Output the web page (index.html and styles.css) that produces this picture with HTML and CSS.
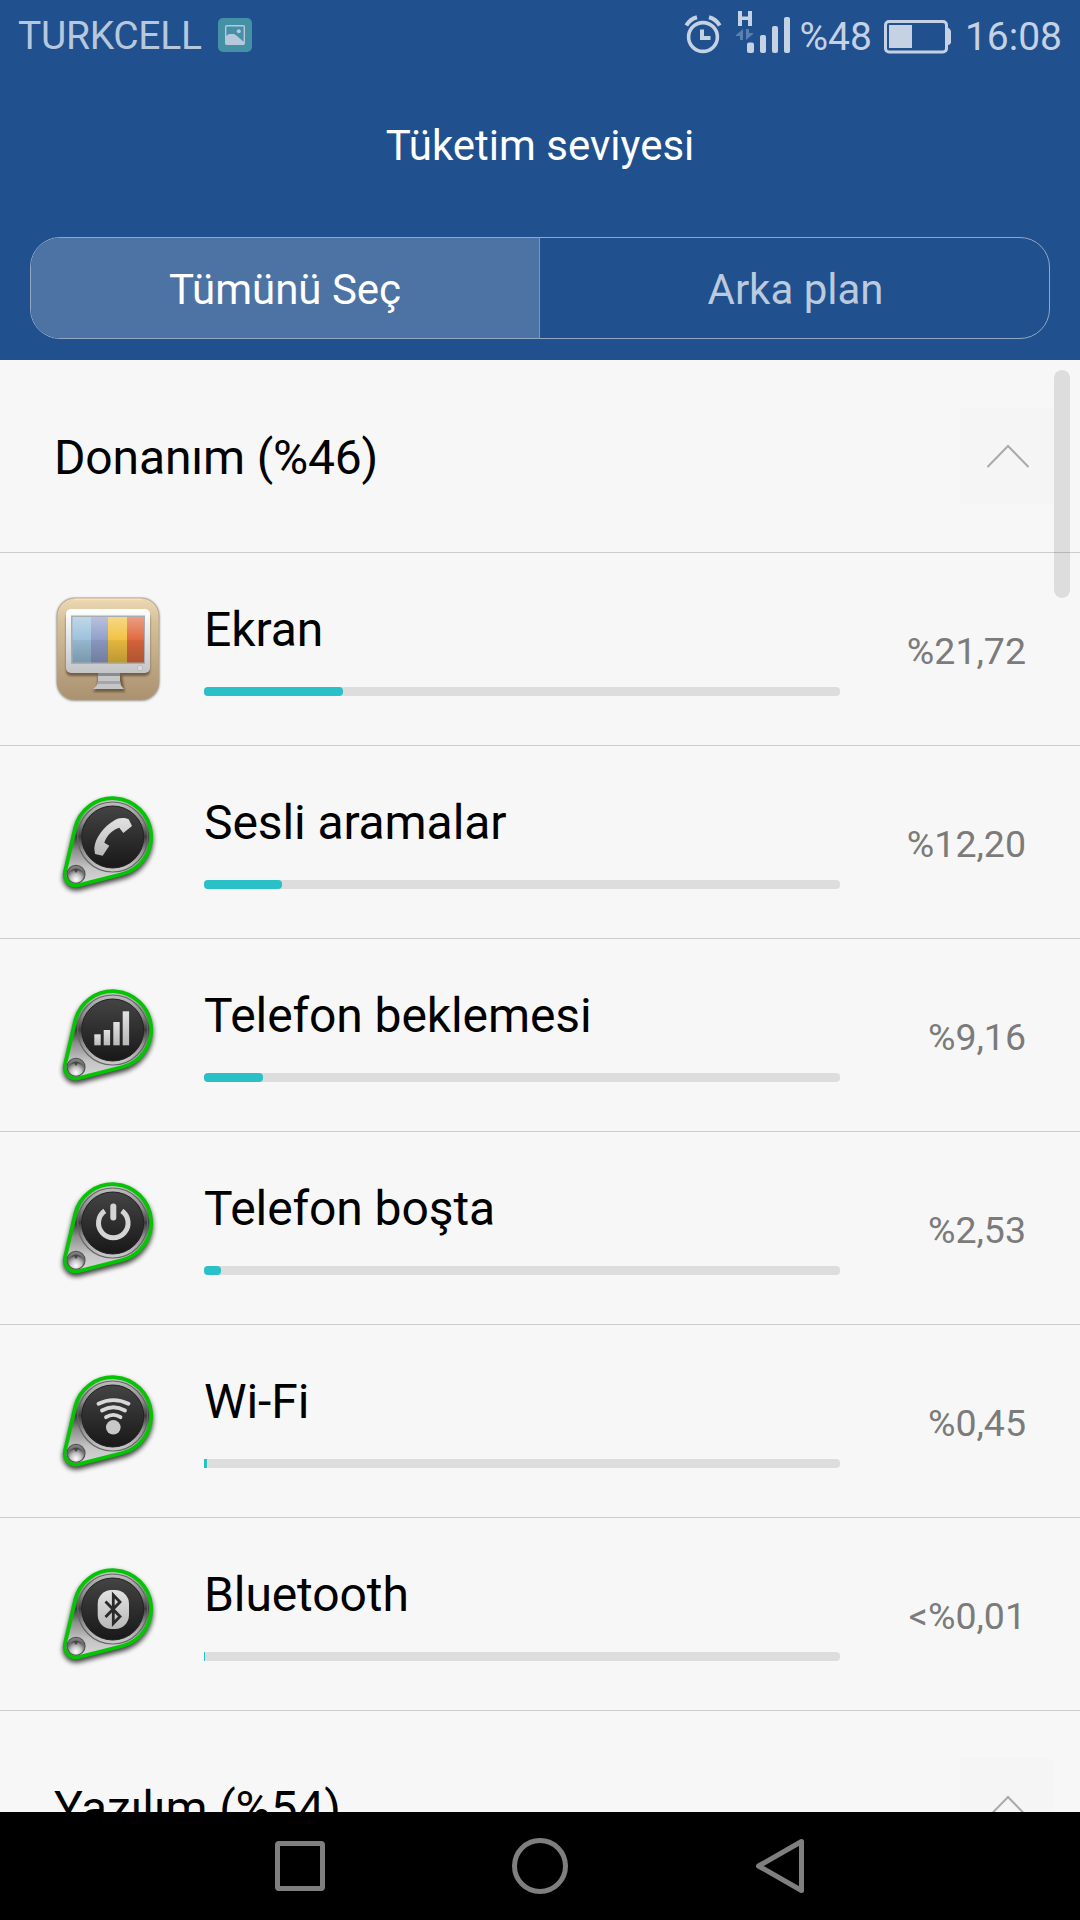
FILE: index.html
```html
<!DOCTYPE html>
<html lang="tr">
<head>
    <meta charset="UTF-8">
    <meta name="viewport" content="width=device-width, initial-scale=1.0">
    <title>Tüketim seviyesi</title>
    <link rel="stylesheet" href="styles.css">
</head>
<body>
    <!-- shared badge shape for the hardware icons -->
    <svg class="defs" width="0" height="0">
        <defs>
            <linearGradient id="metal" x1="0" y1="0" x2="0" y2="1">
                <stop offset="0" stop-color="#c8c8c8"/>
                <stop offset="0.28" stop-color="#8a8a8a"/>
                <stop offset="0.44" stop-color="#3c3c3c"/>
                <stop offset="0.6" stop-color="#909090"/>
                <stop offset="0.8" stop-color="#c4c4c4"/>
                <stop offset="1" stop-color="#d8d8d8"/>
            </linearGradient>
            <linearGradient id="disc" x1="0" y1="0" x2="0" y2="1">
                <stop offset="0" stop-color="#444"/>
                <stop offset="1" stop-color="#181818"/>
            </linearGradient>
            <linearGradient id="glyph" x1="0" y1="0" x2="0" y2="1">
                <stop offset="0" stop-color="#e2e2e2"/>
                <stop offset="1" stop-color="#b8b8b8"/>
            </linearGradient>
            <radialGradient id="knob" cx="0.5" cy="0.8" r="0.75">
                <stop offset="0" stop-color="#fff"/>
                <stop offset="0.4" stop-color="#c4c4c4"/>
                <stop offset="0.75" stop-color="#666"/>
                <stop offset="1" stop-color="#888"/>
            </radialGradient>
            <filter id="soft" x="-20%" y="-20%" width="140%" height="140%">
                <feGaussianBlur stdDeviation="2.4"/>
            </filter>
            <symbol id="badge" viewBox="0 0 108 108">
                <path d="M21.2 40A38.5 38.5 0 1 1 68.3 86L24.8 97.2A11.3 11.3 0 0 1 11 83.7Z" transform="translate(0 3)" fill="#000" stroke="#000" stroke-width="4" opacity="0.75" filter="url(#soft)"/>
                <path d="M21.2 40A38.5 38.5 0 1 1 68.3 86L24.8 97.2A11.3 11.3 0 0 1 11 83.7Z" fill="url(#metal)" stroke="#04c404" stroke-width="3.8"/>
                <circle cx="58.7" cy="49" r="35" fill="none" stroke="#666" stroke-width="1.2"/>
                <circle cx="58.7" cy="49" r="31" fill="url(#disc)" stroke="#222" stroke-width="1"/>
                <circle cx="22" cy="86.3" r="9" fill="url(#knob)" stroke="#555" stroke-width="1.2"/>
                <path d="M16 84q6-7 12 0l-4-2-2 3-2-3z" fill="#444"/>
            </symbol>
        </defs>
    </svg>

    <div class="screen">
        <header class="header">
            <div class="status-bar">
                <span class="carrier">TURKCELL</span>
                <svg class="photo-icon" width="34" height="34" viewBox="0 0 34 34">
                    <rect width="34" height="34" rx="5" fill="#4490a7"/>
                    <rect x="7.7" y="7.7" width="18.6" height="18.6" rx="1" fill="none" stroke="#b7c7dc" stroke-width="1.4"/>
                    <path d="M8 18l3-2h5l3 2 7 6v3H8z" fill="#b7c7dc"/>
                    <circle cx="20.8" cy="13.2" r="2" fill="#b7c7dc"/>
                </svg>
                <svg class="alarm-icon" width="38" height="40" viewBox="0 0 38 40">
                    <g fill="none" stroke="#c5d2e4">
                        <circle cx="19" cy="23" r="14.4" stroke-width="3.6"/>
                        <path d="M18 15.5v8.5h8.5" stroke-width="4"/>
                        <path d="M2.3 11.5Q6 5 13 3.2M35.7 11.5Q32 5 25 3.2" stroke-width="4"/>
                    </g>
                </svg>
                <svg class="signal-icon" width="56" height="44" viewBox="0 0 56 44">
                    <g fill="#c5d2e4">
                        <path d="M4 1h4v5.5h6V1h4v15h-4v-6H8v6H4z"/>
                        <rect x="13" y="32.5" width="7" height="10.5" rx="2"/>
                        <rect x="26" y="25" width="6" height="18" rx="2"/>
                        <rect x="38" y="16" width="6" height="27" rx="2"/>
                        <rect x="50" y="7" width="6" height="36" rx="2"/>
                    </g>
                    <path d="M2 25l7-6v11H6v-4H2zM19 24l-7 6V19h3v4h4z" fill="#5a80af"/>
                </svg>
                <span class="percent">%48</span>
                <svg class="battery-icon" width="68" height="34" viewBox="0 0 68 34">
                    <rect x="1.5" y="1.5" width="61" height="30.5" rx="3.5" fill="none" stroke="#c5d2e4" stroke-width="3"/>
                    <rect x="5" y="5" width="23" height="23" fill="#c5d2e4"/>
                    <path d="M63 8h2l2 3v12l-2 2h-2z" fill="#c5d2e4"/>
                </svg>
                <span class="clock">16:08</span>
            </div>
            <h1 class="title">Tüketim seviyesi</h1>
            <div class="tabs">
                <button class="tab active">Tümünü Seç</button>
                <button class="tab">Arka plan</button>
            </div>
        </header>

        <main class="content">
            <div class="scrollbar"></div>

            <div class="section">
                <h2>Donanım (%46)</h2>
                <span class="toggle">
                    <svg width="44" height="26" viewBox="0 0 44 26"><path d="M1.5 24L22 3l20.5 21" fill="none" stroke="#aaa" stroke-width="2"/></svg>
                </span>
            </div>

            <div class="row">
                <svg class="icon" viewBox="0 0 108 108">
                    <defs>
                        <linearGradient id="tan" x1="0" y1="0" x2="0" y2="1">
                            <stop offset="0" stop-color="#ecd9b4"/>
                            <stop offset="0.25" stop-color="#d4bf9b"/>
                            <stop offset="1" stop-color="#aa9170"/>
                        </linearGradient>
                        <linearGradient id="frame" x1="0" y1="0" x2="0" y2="1">
                            <stop offset="0" stop-color="#fff"/>
                            <stop offset="1" stop-color="#c2c4c6"/>
                        </linearGradient>
                        <linearGradient id="shade" x1="0" y1="0" x2="0" y2="1">
                            <stop offset="0" stop-color="#fff" stop-opacity="0.35"/>
                            <stop offset="0.5" stop-color="#fff" stop-opacity="0"/>
                            <stop offset="0.5" stop-color="#000" stop-opacity="0.06"/>
                            <stop offset="1" stop-color="#000" stop-opacity="0.22"/>
                        </linearGradient>
                        <filter id="blur"><feGaussianBlur stdDeviation="1.3"/></filter>
                    </defs>
                    <rect x="2.5" y="3" width="103" height="103" rx="18" fill="#777" opacity="0.7" filter="url(#blur)"/>
                    <rect x="3" y="3" width="102" height="102" rx="18" fill="url(#tan)" stroke="#b3a183" stroke-width="0.8"/>
                    <path d="M20 4.5h68" stroke="#f5e3bb" stroke-width="1.5"/>
                    <g fill="#5d4930" opacity="0.75" filter="url(#blur)">
                        <rect x="12" y="18" width="84" height="63" rx="5"/>
                        <path d="M44 80h24l2 13 1 4H39l4-6z"/>
                    </g>
                    <rect x="12" y="14" width="84" height="64" rx="5" fill="url(#frame)"/>
                    <path d="M44 78h22v9q0 3 4 7H39q5-4 5-7z" fill="#c5c6c8"/>
                    <path d="M44 78h22v3H44z" fill="#898b8e"/>
                    <path d="M44 86h22l1 3H43z" fill="#a4a6a9"/>
                    <rect x="17" y="20.5" width="74" height="48.5" fill="#a8adb2"/>
                    <path d="M18.5 22H37v45.5H18.5z" fill="#9dc2dc"/>
                    <path d="M37 22h17v45.5H37z" fill="#929fca"/>
                    <path d="M54 22h19v45.5H54z" fill="#f2c243"/>
                    <path d="M73 22h17v45.5H73z" fill="#e16a40"/>
                    <rect x="18.5" y="22" width="71.5" height="45.5" fill="url(#shade)"/>
                    <circle cx="86" cy="73" r="2.6" fill="#ddd" stroke="#bbb"/>
                </svg>
                <div class="info">
                    <div class="name">Ekran</div>
                    <div class="bar"><div class="fill" style="width: 21.86%"></div></div>
                </div>
                <div class="value">%21,72</div>
            </div>

            <div class="row">
                <svg class="icon" viewBox="0 0 108 108">
                    <use href="#badge"/>
                    <path d="M41 66L48.7 67.7 55.3 57.7 50.3 54.7C52.7 47 59.3 41.3 65.3 39.7L69.3 45 78 38 74.7 31.3C71 29.3 64.3 29.3 61 32 49.3 38.7 41 50.3 40.3 60.3Z" fill="url(#glyph)"/>
                </svg>
                <div class="info">
                    <div class="name">Sesli aramalar</div>
                    <div class="bar"><div class="fill" style="width: 12.20%"></div></div>
                </div>
                <div class="value">%12,20</div>
            </div>

            <div class="row">
                <svg class="icon" viewBox="0 0 108 108">
                    <use href="#badge"/>
                    <g fill="url(#glyph)">
                        <rect x="40.3" y="53.3" width="6.4" height="11"/>
                        <rect x="49.7" y="49" width="6.4" height="15.3"/>
                        <rect x="59.3" y="41" width="6.4" height="23.3"/>
                        <rect x="68.7" y="30.3" width="6.4" height="34"/>
                    </g>
                </svg>
                <div class="info">
                    <div class="name">Telefon beklemesi</div>
                    <div class="bar"><div class="fill" style="width: 9.28%"></div></div>
                </div>
                <div class="value">%9,16</div>
            </div>

            <div class="row">
                <svg class="icon" viewBox="0 0 108 108">
                    <use href="#badge"/>
                    <g fill="none" stroke="#d4d4d4" stroke-width="5">
                        <path d="M67.8 36.9A14.8 14.8 0 1 1 50.8 36.9"/>
                        <path d="M59.3 32.5V43.5" stroke-width="6" stroke-linecap="round"/>
                    </g>
                </svg>
                <div class="info">
                    <div class="name">Telefon boşta</div>
                    <div class="bar"><div class="fill" style="width: 2.67%"></div></div>
                </div>
                <div class="value">%2,53</div>
            </div>

            <div class="row">
                <svg class="icon" viewBox="0 0 108 108">
                    <use href="#badge"/>
                    <g fill="none" stroke="#d8d8d8" stroke-width="3.8" stroke-linecap="round">
                        <path d="M44.5 36.8Q59.3 29.5 74.5 36.8"/>
                        <path d="M48 43.5Q59.3 37 71 43.5"/>
                        <path d="M52 50.2Q59.3 45.5 66.5 50.2"/>
                    </g>
                    <circle cx="59.3" cy="60.3" r="7.3" fill="#c8c8c8"/>
                </svg>
                <div class="info">
                    <div class="name">Wi-Fi</div>
                    <div class="bar"><div class="fill thin" style="width: 0.45%"></div></div>
                </div>
                <div class="value">%0,45</div>
            </div>

            <div class="row">
                <svg class="icon" viewBox="0 0 108 108">
                    <use href="#badge"/>
                    <rect x="43.7" y="30" width="31.3" height="39" rx="14" fill="url(#glyph)"/>
                    <path d="M51.5 41.5L66 56.5 59.3 63.5V35L66 42 51.5 57" fill="none" stroke="#2a2a2a" stroke-width="2.8"/>
                </svg>
                <div class="info">
                    <div class="name">Bluetooth</div>
                    <div class="bar"><div class="fill thin" style="width: 0.16%"></div></div>
                </div>
                <div class="value">&lt;%0,01</div>
            </div>

            <div class="section">
                <h2>Yazılım (%54)</h2>
                <span class="toggle">
                    <svg width="44" height="26" viewBox="0 0 44 26"><path d="M1.5 24L22 3l20.5 21" fill="none" stroke="#aaa" stroke-width="2"/></svg>
                </span>
            </div>
        </main>

        <nav class="nav-bar">
            <svg viewBox="0 0 60 60"><rect x="7.5" y="7.5" width="45" height="45" rx="1.5"/></svg>
            <svg viewBox="0 0 60 60"><circle cx="30" cy="30" r="25.5"/></svg>
            <svg viewBox="0 0 60 60"><path d="M51.5 5.5v49L8.5 30z" stroke-linejoin="round"/></svg>
        </nav>
    </div>
</body>
</html>
```
FILE: styles.css
```css
* {
    box-sizing: border-box;
}
body {
    margin: 0;
    font-family: Roboto, sans-serif;
    background-color: #f7f7f7;
    color: #000;
}
.defs {
    position: absolute;
}
.screen {
    width: 1080px;
    height: 1920px;
    display: flex;
    flex-direction: column;
    overflow: hidden;
}
.header {
    flex: none;
    height: 360px;
    background-color: #20508d;
    color: #fff;
}
.status-bar {
    height: 72px;
    display: flex;
    align-items: center;
    padding: 0 18px;
    font-size: 39px;
    line-height: 46px;
    color: #c5d2e4;
}
.carrier {
    color: #b7c7dc;
    letter-spacing: -0.3px;
}
.photo-icon {
    margin-left: 16px;
    margin-bottom: 2px;
}
.alarm-icon {
    margin-left: auto;
    margin-bottom: 4px;
}
.signal-icon {
    margin-left: 12px;
    margin-bottom: 8px;
}
.percent {
    margin-left: 9px;
    padding-top: 2px;
}
.battery-icon {
    margin-left: 12px;
    margin-top: 2px;
}
.clock {
    margin-left: 13px;
    padding-top: 2px;
}
.title {
    margin: 0;
    height: 165px;
    line-height: 148px;
    font-size: 42px;
    font-weight: 400;
    text-align: center;
}
.tabs {
    display: flex;
    height: 102px;
    margin: 0 30px;
    border: 1px solid #90a7c6;
    border-radius: 30px;
    overflow: hidden;
}
.tab {
    flex: 1;
    padding: 2px 0 0 2px;
    border: none;
    background: none;
    font-family: inherit;
    font-size: 42px;
    color: #bccadd;
}
.tab.active {
    flex: none;
    width: 509px;
    padding-left: 0;
    background-color: #4d73a4;
    border-right: 1px solid #7995bb;
    color: #fff;
}
.content {
    position: relative;
    flex: 1;
    min-height: 0;
    overflow: hidden;
}
.scrollbar {
    position: absolute;
    top: 10px;
    right: 10px;
    width: 16px;
    height: 228px;
    border-radius: 8px;
    background-color: rgba(0, 0, 0, 0.1);
}
.section,
.row {
    display: flex;
    align-items: center;
    height: 193px;
    border-bottom: 1px solid #ccc;
}
.section {
    justify-content: space-between;
    padding: 0 26px 0 54px;
}
.section h2 {
    margin: 0;
    padding-top: 2px;
    font-size: 48px;
    font-weight: 400;
    letter-spacing: -0.15px;
}
.toggle {
    display: flex;
    align-items: center;
    justify-content: center;
    width: 94px;
    height: 96px;
    background-color: #f5f5f5;
}
.toggle svg {
    margin-left: 2px;
}
.row {
    padding: 0 54px;
}
.icon {
    flex: none;
    width: 108px;
    height: 108px;
}
.info {
    width: 636px;
    margin-left: 42px;
}
.name {
    margin-bottom: 29px;
    font-size: 48px;
    line-height: 56px;
    letter-spacing: -0.1px;
}
.bar {
    height: 9px;
    border-radius: 4px;
    background-color: #ddd;
}
.fill {
    height: 9px;
    border-radius: 4px;
    background-color: #29c0c8;
}
.fill.thin {
    border-radius: 0;
}
.value {
    margin-left: auto;
    padding-top: 4px;
    font-size: 37.5px;
    color: #7b7b7b;
}
.nav-bar {
    flex: none;
    height: 108px;
    display: flex;
    align-items: center;
    justify-content: center;
    gap: 180px;
    background-color: #000;
}
.nav-bar svg {
    width: 60px;
    height: 60px;
    fill: none;
    stroke: #7f7f7f;
    stroke-width: 5;
}
```
